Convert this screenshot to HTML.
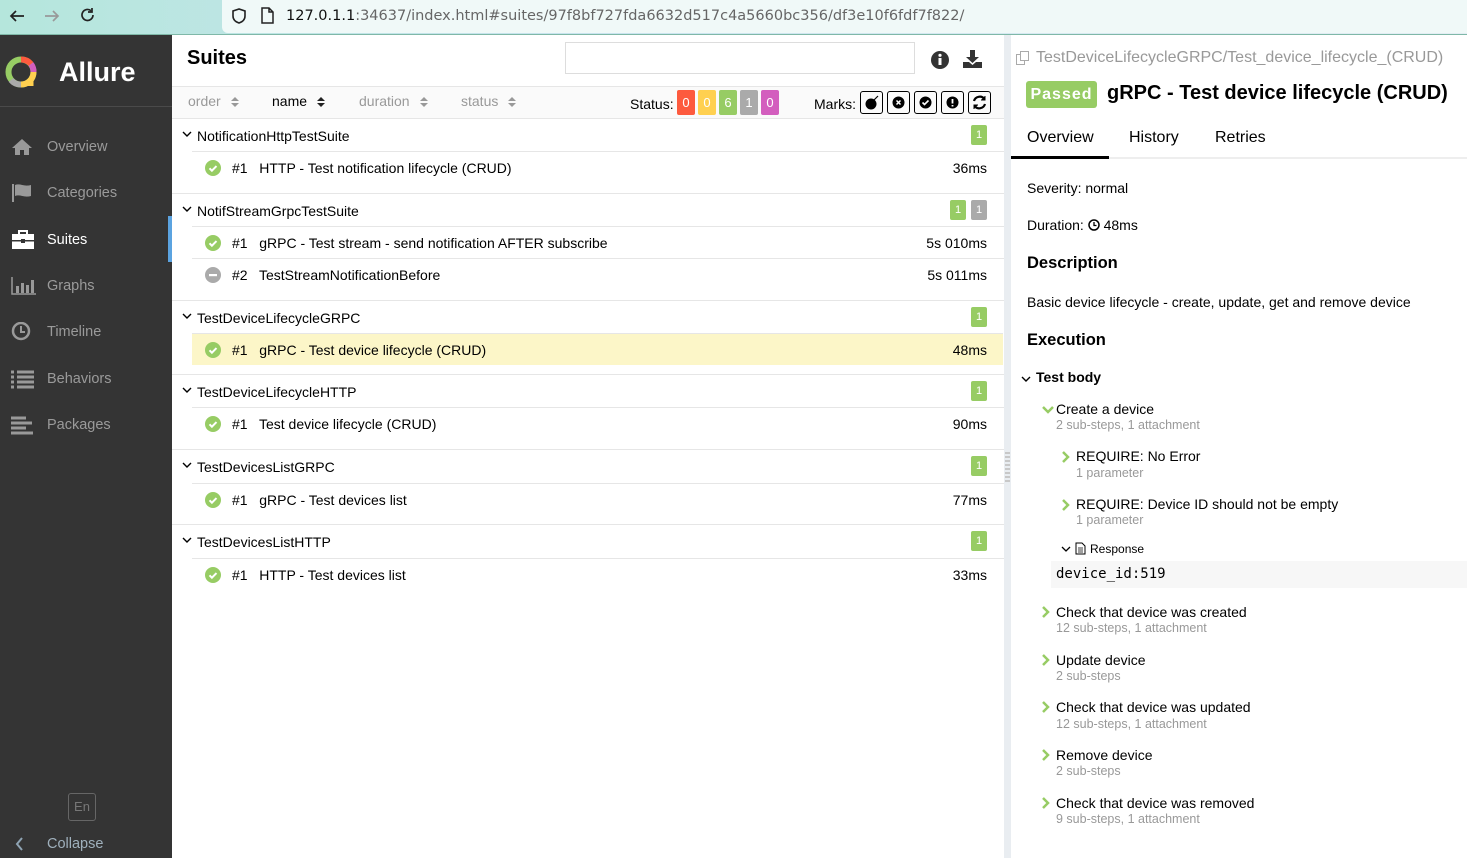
<!DOCTYPE html>
<html><head><meta charset="utf-8"><style>
*{box-sizing:border-box;margin:0;padding:0}
body{width:1467px;height:858px;overflow:hidden;font-family:"Liberation Sans",sans-serif;font-size:14px;color:#000;position:relative;background:#fff}
.a{position:absolute;white-space:nowrap}
#bar{left:0;top:0;width:1467px;height:35px;background:linear-gradient(90deg,#b5e6dc,#c9e4ef 40%,#e4eef4);border-bottom:1px solid #7fb8a8}
#url{left:222px;top:0;width:1245px;height:33px;background:#f0f9f8;border-radius:0 0 0 6px}
#side{left:0;top:35px;width:172px;height:823px;background:#343434}
.nav{position:absolute;left:0;width:172px;height:46px;color:#9a9a9a;font-size:14.5px}
.nav span{position:absolute;left:47px;top:16px}
.nav svg{position:absolute;left:11px;top:14px}
.grp{position:absolute;left:172px;width:832px}
.gh{height:32px;position:relative;font-size:14px}
.gh .t{position:absolute;left:25px;top:9px}
.gh .cv{position:absolute;left:10px;top:11px}
.it{position:absolute;left:20px;width:812px;height:32px;border-top:1px solid #e6e6e6;font-size:14px}
.it .ic{position:absolute;left:13px;top:8px}
.it .n{position:absolute;left:40px;top:8px}
.it .d{position:absolute;right:17px;top:8px}
.cnt{position:absolute;right:17px;top:6px;width:16px;height:20px;background:#97cc64;color:#fff;font-size:11px;text-align:center;line-height:20px;border-radius:2px}
.gb{border-top:1px solid #e6e6e6}
.st{position:absolute;font-size:14px}
.sub{color:#999;font-size:12.5px}
.sa{display:inline-block;vertical-align:middle;margin-left:9px}
</style></head><body>
<div id="bar" class="a"></div>
<div id="url" class="a"></div>
<svg class="a" style="left:8px;top:8px" width="18" height="16"><path d="M16 8H3M8 3L3 8l5 5" stroke="#222" stroke-width="1.7" fill="none"/></svg>
<svg class="a" style="left:43px;top:8px" width="18" height="16"><path d="M2 8h13M10 3l5 5-5 5" stroke="#999" stroke-width="1.7" fill="none"/></svg>
<svg class="a" style="left:79px;top:6px" width="18" height="18"><path d="M14 9a5.5 5.5 0 1 1-2-4.3M13 2v4h-4" stroke="#222" stroke-width="1.7" fill="none"/></svg>
<svg class="a" style="left:231px;top:7px" width="16" height="18"><path d="M8 2L2 4v5c0 4 3 6 6 7 3-1 6-3 6-7V4z" stroke="#222" stroke-width="1.6" fill="none"/></svg>
<svg class="a" style="left:260px;top:7px" width="14" height="18"><path d="M2 1h7l4 4v11H2zM9 1v4h4" stroke="#222" stroke-width="1.5" fill="none"/></svg>
<div class="a" style="left:286px;top:8px;font-family:'DejaVu Sans',sans-serif;font-size:14.5px;color:#666"><span style="color:#111">127.0.1.1</span>:34637/index.html#suites/97f8bf727fda6632d517c4a5660bc356/df3e10f6fdf7f822/</div>

<div id="side" class="a"></div>
<svg class="a" style="left:4px;top:54px" width="36" height="36" viewBox="0 0 36 36">
<circle cx="17" cy="18" r="12.5" fill="none" stroke="#97cc64" stroke-width="6"/>
<path d="M17 5.5A12.5 12.5 0 0 1 27 10" stroke="#fd5a3e" stroke-width="6" fill="none"/>
<path d="M27 10A12.5 12.5 0 0 1 29.5 18" stroke="#d35ebe" stroke-width="6" fill="none"/>
<path d="M17 30.5A12.5 12.5 0 0 1 7 26" stroke="#aaa" stroke-width="6" fill="none"/>
<path d="M29.5 16V32H17V30.5A12.5 12.5 0 0 0 29.5 18" fill="#ffd050"/><path d="M29.5 18A12.5 12.5 0 0 1 17 30.5" stroke="#ffd050" stroke-width="6" fill="none"/></svg>
<div class="a" style="left:59px;top:57px;color:#fff;font-size:27px;font-weight:bold">Allure</div>
<div class="a" style="left:0;top:106px;width:172px;height:1px;background:#4a4a4a"></div>
<div class="nav" style="top:123px"><svg width="22" height="20"><path d="M11 2L1 11h3v7h5v-5h4v5h5v-7h3z" fill="#999"/></svg><span>Overview</span></div>
<div class="nav" style="top:169px"><svg width="22" height="20"><path d="M2 1v18" stroke="#999" stroke-width="2"/><path d="M4 2c5-2 9 2 16 0v11c-7 2-11-2-16 0z" fill="#999"/></svg><span>Categories</span></div>
<div class="nav" style="top:216px;color:#fff"><svg width="24" height="20"><rect x="1" y="4" width="22" height="15" fill="#fff"/><rect x="8" y="1" width="8" height="4" fill="none" stroke="#fff" stroke-width="2"/><rect x="1" y="10" width="22" height="1.5" fill="#343434"/><rect x="10" y="9" width="4" height="4" fill="#343434"/></svg><span>Suites</span></div>
<div class="a" style="left:168px;top:216px;width:4px;height:46px;background:#5ba3e0"></div>
<div class="nav" style="top:262px"><svg width="26" height="20"><path d="M1 1v17h24" stroke="#999" stroke-width="1.5" fill="none"/><rect x="5" y="10" width="3" height="7" fill="#999"/><rect x="10" y="7" width="3" height="10" fill="#999"/><rect x="15" y="9" width="3" height="8" fill="#999"/><rect x="20" y="4" width="3" height="13" fill="#999"/></svg><span>Graphs</span></div>
<div class="nav" style="top:308px"><svg width="22" height="20"><circle cx="10" cy="9" r="8" stroke="#999" stroke-width="2.5" fill="none"/><path d="M10 4v6h4" stroke="#999" stroke-width="2" fill="none"/></svg><span>Timeline</span></div>
<div class="nav" style="top:355px"><svg width="24" height="20"><path d="M0 3h3M6 3h17M0 8h3M6 8h17M0 13h3M6 13h17M0 18h3M6 18h17" stroke="#999" stroke-width="3"/></svg><span>Behaviors</span></div>
<div class="nav" style="top:401px"><svg width="24" height="20"><path d="M0 3h15M0 8h21M0 13h15M0 18h22" stroke="#999" stroke-width="3"/></svg><span>Packages</span></div>
<div class="a" style="left:68px;top:793px;width:28px;height:28px;border:1px solid #666;border-radius:3px;color:#777;font-size:13px;text-align:center;line-height:26px">En</div>
<svg class="a" style="left:15px;top:836px" width="10" height="16"><path d="M7 2L2 8l5 6" stroke="#8ea3b3" stroke-width="2" fill="none"/></svg>
<div class="a" style="left:47px;top:836px;color:#9fb0bc;font-size:14.5px">Collapse</div>

<div class="a" style="left:187px;top:47px;font-size:20px;font-weight:bold">Suites</div>
<div class="a" style="left:565px;top:42px;width:350px;height:32px;border:1px solid #ddd"></div>
<svg class="a" style="left:930px;top:50px" width="20" height="20"><circle cx="10" cy="10" r="9" fill="#333"/><rect x="8.5" y="8" width="3" height="7" fill="#fff"/><circle cx="10" cy="5.3" r="1.6" fill="#fff"/></svg>
<svg class="a" style="left:962px;top:49px" width="22" height="20"><path d="M8 1h5v7h4l-6.5 6L4 8h4z" fill="#333"/><path d="M1 13h6l3.5 3 3.5-3h6v6H1z" fill="#333"/></svg>
<div class="a" style="left:172px;top:86px;width:832px;height:33px;background:#fafafa;border-top:1px solid #e6e6e6;border-bottom:1px solid #e6e6e6"></div>
<div class="a" style="left:188px;top:93px;color:#999;font-size:14px">order<svg class="sa" width="10" height="12"><path d="M1 5l4-4 4 4zM1 7l4 4 4-4z" fill="#999"/></svg></div>
<div class="a" style="left:272px;top:93px;color:#000;font-size:14px">name<svg class="sa" width="10" height="12"><path d="M1 5l4-4 4 4zM1 7l4 4 4-4z" fill="#222"/></svg></div>
<div class="a" style="left:359px;top:93px;color:#999;font-size:14px">duration<svg class="sa" width="10" height="12"><path d="M1 5l4-4 4 4zM1 7l4 4 4-4z" fill="#999"/></svg></div>
<div class="a" style="left:461px;top:93px;color:#999;font-size:14px">status<svg class="sa" width="10" height="12"><path d="M1 5l4-4 4 4zM1 7l4 4 4-4z" fill="#999"/></svg></div>
<div class="a" style="left:630px;top:96px;font-size:14px">Status:</div>
<div class="a" style="left:677px;top:90px;display:flex;gap:3px;color:#fff;font-size:13px">
<div style="width:18px;height:25px;background:#fd5a3e;border-radius:2px;text-align:center;line-height:25px">0</div>
<div style="width:18px;height:25px;background:#ffd050;border-radius:2px;text-align:center;line-height:25px">0</div>
<div style="width:18px;height:25px;background:#97cc64;border-radius:2px;text-align:center;line-height:25px">6</div>
<div style="width:18px;height:25px;background:#aaa;border-radius:2px;text-align:center;line-height:25px">1</div>
<div style="width:18px;height:25px;background:#d35ebe;border-radius:2px;text-align:center;line-height:25px">0</div></div>
<div class="a" style="left:814px;top:96px;font-size:14px">Marks:</div>
<div class="a" style="left:860px;top:91px;display:flex;gap:4px">
<div style="width:23px;height:23px;border:1px solid #000;border-radius:3px;position:relative"><svg width="21" height="21"><circle cx="10" cy="12" r="5.5" fill="#000"/><path d="M13 8l4-4" stroke="#000" stroke-width="1.2"/></svg></div>
<div style="width:23px;height:23px;border:1px solid #000;border-radius:3px"><svg width="21" height="21"><circle cx="10.5" cy="10.5" r="6" fill="#000"/><path d="M8.5 8.5l4 4M12.5 8.5l-4 4" stroke="#fff" stroke-width="1.5"/></svg></div>
<div style="width:23px;height:23px;border:1px solid #000;border-radius:3px"><svg width="21" height="21"><circle cx="10.5" cy="10.5" r="6" fill="#000"/><path d="M7.5 10.5l2 2 4-4" stroke="#fff" stroke-width="1.6" fill="none"/></svg></div>
<div style="width:23px;height:23px;border:1px solid #000;border-radius:3px"><svg width="21" height="21"><circle cx="10.5" cy="10.5" r="6" fill="#000"/><path d="M10.5 7v4.5M10.5 13v1.5" stroke="#fff" stroke-width="1.8"/></svg></div>
<div style="width:23px;height:23px;border:1px solid #000;border-radius:3px"><svg width="21" height="21"><path d="M5 9a6 6 0 0 1 10.5-2M16 12a6 6 0 0 1-10.5 2" stroke="#000" stroke-width="2.2" fill="none"/><path d="M16 4v4h-4M5 17v-4h4" fill="#000" stroke="#000" stroke-width="1"/></svg></div></div>

<div class="grp" style="top:119px;height:74px">
<div class="gh"><svg class="cv" width="10" height="8"><path d="M1 2l4 4 4-4" stroke="#000" stroke-width="1.4" fill="none"/></svg><span class="t">NotificationHttpTestSuite</span><div class="cnt">1</div></div>
<div class="it" style="top:32px"><svg class="ic" width="16" height="16"><circle cx="8" cy="8" r="8" fill="#97cc64"/><path d="M4.5 8.3l2.4 2.4 4.6-4.6" stroke="#fff" stroke-width="2" fill="none"/></svg><span class="n">#1&nbsp;&nbsp; HTTP - Test notification lifecycle (CRUD)</span><span class="d">36ms</span></div></div>
<div class="grp gb" style="top:193px;height:107px">
<div class="gh"><svg class="cv" width="10" height="8"><path d="M1 2l4 4 4-4" stroke="#000" stroke-width="1.4" fill="none"/></svg><span class="t">NotifStreamGrpcTestSuite</span><div class="cnt" style="right:38px">1</div><div class="cnt" style="background:#aaa">1</div></div>
<div class="it" style="top:32px"><svg class="ic" width="16" height="16"><circle cx="8" cy="8" r="8" fill="#97cc64"/><path d="M4.5 8.3l2.4 2.4 4.6-4.6" stroke="#fff" stroke-width="2" fill="none"/></svg><span class="n">#1&nbsp;&nbsp; gRPC - Test stream - send notification AFTER subscribe</span><span class="d">5s 010ms</span></div>
<div class="it" style="top:64px"><svg class="ic" width="16" height="16"><circle cx="8" cy="8" r="8" fill="#aaa"/><rect x="4" y="7" width="8" height="2.2" fill="#fff"/></svg><span class="n">#2&nbsp;&nbsp; TestStreamNotificationBefore</span><span class="d">5s 011ms</span></div></div>
<div class="grp gb" style="top:300px;height:74px">
<div class="gh"><svg class="cv" width="10" height="8"><path d="M1 2l4 4 4-4" stroke="#000" stroke-width="1.4" fill="none"/></svg><span class="t">TestDeviceLifecycleGRPC</span><div class="cnt">1</div></div>
<div class="it" style="top:32px;background:#fcf6c8;width:811px"><svg class="ic" width="16" height="16"><circle cx="8" cy="8" r="8" fill="#97cc64"/><path d="M4.5 8.3l2.4 2.4 4.6-4.6" stroke="#fff" stroke-width="2" fill="none"/></svg><span class="n">#1&nbsp;&nbsp; gRPC - Test device lifecycle (CRUD)</span><span class="d" style="right:16px">48ms</span></div></div>
<div class="grp gb" style="top:374px;height:75px">
<div class="gh"><svg class="cv" width="10" height="8"><path d="M1 2l4 4 4-4" stroke="#000" stroke-width="1.4" fill="none"/></svg><span class="t">TestDeviceLifecycleHTTP</span><div class="cnt">1</div></div>
<div class="it" style="top:32px"><svg class="ic" width="16" height="16"><circle cx="8" cy="8" r="8" fill="#97cc64"/><path d="M4.5 8.3l2.4 2.4 4.6-4.6" stroke="#fff" stroke-width="2" fill="none"/></svg><span class="n">#1&nbsp;&nbsp; Test device lifecycle (CRUD)</span><span class="d">90ms</span></div></div>
<div class="grp gb" style="top:449px;height:75px">
<div class="gh"><svg class="cv" width="10" height="8"><path d="M1 2l4 4 4-4" stroke="#000" stroke-width="1.4" fill="none"/></svg><span class="t">TestDevicesListGRPC</span><div class="cnt">1</div></div>
<div class="it" style="top:33px"><svg class="ic" width="16" height="16"><circle cx="8" cy="8" r="8" fill="#97cc64"/><path d="M4.5 8.3l2.4 2.4 4.6-4.6" stroke="#fff" stroke-width="2" fill="none"/></svg><span class="n">#1&nbsp;&nbsp; gRPC - Test devices list</span><span class="d">77ms</span></div></div>
<div class="grp gb" style="top:524px;height:75px">
<div class="gh"><svg class="cv" width="10" height="8"><path d="M1 2l4 4 4-4" stroke="#000" stroke-width="1.4" fill="none"/></svg><span class="t">TestDevicesListHTTP</span><div class="cnt">1</div></div>
<div class="it" style="top:33px"><svg class="ic" width="16" height="16"><circle cx="8" cy="8" r="8" fill="#97cc64"/><path d="M4.5 8.3l2.4 2.4 4.6-4.6" stroke="#fff" stroke-width="2" fill="none"/></svg><span class="n">#1&nbsp;&nbsp; HTTP - Test devices list</span><span class="d">33ms</span></div></div>

<div class="a" style="left:1004px;top:35px;width:7px;height:823px;background:#e9edf1"></div>
<div class="a" style="left:1005px;top:452px;width:5px;height:30px;background:repeating-linear-gradient(#c8c8c8 0 2px,transparent 2px 4px)"></div>

<svg class="a" style="left:1015px;top:50px" width="16" height="16"><rect x="1.5" y="4.5" width="8" height="10" fill="none" stroke="#aaa"/><rect x="5.5" y="1.5" width="8" height="9" fill="#fff" stroke="#aaa"/></svg>
<div class="a" style="left:1036px;top:49px;color:#999;font-size:16px">TestDeviceLifecycleGRPC/Test_device_lifecycle_(CRUD)</div>
<div class="a" style="left:1026px;top:81px;width:71px;height:27px;background:#97cc64;color:#fff;border-radius:3px;font-weight:bold;font-size:16px;text-align:center;line-height:27px;letter-spacing:1px">Passed</div>
<div class="a" style="left:1107px;top:82px;font-size:20px;font-weight:bold">gRPC - Test device lifecycle (CRUD)</div>
<div class="a" style="left:1027px;top:129px;font-size:16px">Overview</div>
<div class="a" style="left:1129px;top:129px;font-size:16px">History</div>
<div class="a" style="left:1215px;top:129px;font-size:16px">Retries</div>
<div class="a" style="left:1011px;top:157px;width:456px;height:2px;background:#eee"></div>
<div class="a" style="left:1011px;top:156px;width:98px;height:3px;background:#000"></div>
<div class="st" style="left:1027px;top:180px">Severity: normal</div>
<div class="st" style="left:1027px;top:217px">Duration: <svg width="12" height="12" style="vertical-align:-1px"><circle cx="6" cy="6" r="5" stroke="#000" stroke-width="1.5" fill="none"/><path d="M6 3v3.5h2.5" stroke="#000" stroke-width="1.3" fill="none"/></svg> 48ms</div>
<div class="st" style="left:1027px;top:254px;font-size:16.5px;font-weight:bold">Description</div>
<div class="st" style="left:1027px;top:294px">Basic device lifecycle - create, update, get and remove device</div>
<div class="st" style="left:1027px;top:331px;font-size:16.5px;font-weight:bold">Execution</div>
<svg class="a" style="left:1021px;top:375px" width="10" height="8"><path d="M1 2l4 4 4-4" stroke="#000" stroke-width="1.4" fill="none"/></svg>
<div class="st" style="left:1036px;top:369px;font-weight:bold">Test body</div>
<svg class="a" style="left:1041px;top:405px" width="14" height="10"><path d="M2 2l5 5 5-5" stroke="#97cc64" stroke-width="2.5" fill="none"/></svg>
<div class="st" style="left:1056px;top:401px">Create a device</div>
<div class="st sub" style="left:1056px;top:418px">2 sub-steps, 1 attachment</div>
<svg class="a" style="left:1061px;top:450px" width="10" height="14"><path d="M2 2l5 5-5 5" stroke="#97cc64" stroke-width="2.5" fill="none"/></svg>
<div class="st" style="left:1076px;top:448px">REQUIRE: No Error</div>
<div class="st sub" style="left:1076px;top:466px">1 parameter</div>
<svg class="a" style="left:1061px;top:498px" width="10" height="14"><path d="M2 2l5 5-5 5" stroke="#97cc64" stroke-width="2.5" fill="none"/></svg>
<div class="st" style="left:1076px;top:496px">REQUIRE: Device ID should not be empty</div>
<div class="st sub" style="left:1076px;top:513px">1 parameter</div>
<svg class="a" style="left:1061px;top:545px" width="10" height="8"><path d="M1 2l4 4 4-4" stroke="#000" stroke-width="1.3" fill="none"/></svg>
<svg class="a" style="left:1075px;top:542px" width="11" height="13"><path d="M1 1h6l3 3v8H1z" stroke="#000" fill="none"/><path d="M3 6h5M3 8h5M3 10h5" stroke="#000" stroke-width=".8"/></svg>
<div class="st" style="left:1090px;top:542px;font-size:12px">Response</div>
<div class="a" style="left:1051px;top:561px;width:416px;height:27px;background:#f7f7f7"></div>
<div class="st" style="left:1056px;top:566px;font-family:'DejaVu Sans Mono','Liberation Mono',monospace;font-size:14px">device_id:519</div>
<div class="st" style="left:1056px;top:604px">Check that device was created</div>
<div class="st sub" style="left:1056px;top:621px">12 sub-steps, 1 attachment</div>
<div class="st" style="left:1056px;top:652px">Update device</div>
<div class="st sub" style="left:1056px;top:669px">2 sub-steps</div>
<div class="st" style="left:1056px;top:699px">Check that device was updated</div>
<div class="st sub" style="left:1056px;top:717px">12 sub-steps, 1 attachment</div>
<div class="st" style="left:1056px;top:747px">Remove device</div>
<div class="st sub" style="left:1056px;top:764px">2 sub-steps</div>
<div class="st" style="left:1056px;top:795px">Check that device was removed</div>
<div class="st sub" style="left:1056px;top:812px">9 sub-steps, 1 attachment</div>
<svg class="a" style="left:1041px;top:605px" width="10" height="14"><path d="M2 2l5 5-5 5" stroke="#97cc64" stroke-width="2.5" fill="none"/></svg>
<svg class="a" style="left:1041px;top:653px" width="10" height="14"><path d="M2 2l5 5-5 5" stroke="#97cc64" stroke-width="2.5" fill="none"/></svg>
<svg class="a" style="left:1041px;top:700px" width="10" height="14"><path d="M2 2l5 5-5 5" stroke="#97cc64" stroke-width="2.5" fill="none"/></svg>
<svg class="a" style="left:1041px;top:748px" width="10" height="14"><path d="M2 2l5 5-5 5" stroke="#97cc64" stroke-width="2.5" fill="none"/></svg>
<svg class="a" style="left:1041px;top:796px" width="10" height="14"><path d="M2 2l5 5-5 5" stroke="#97cc64" stroke-width="2.5" fill="none"/></svg>
</body></html>
